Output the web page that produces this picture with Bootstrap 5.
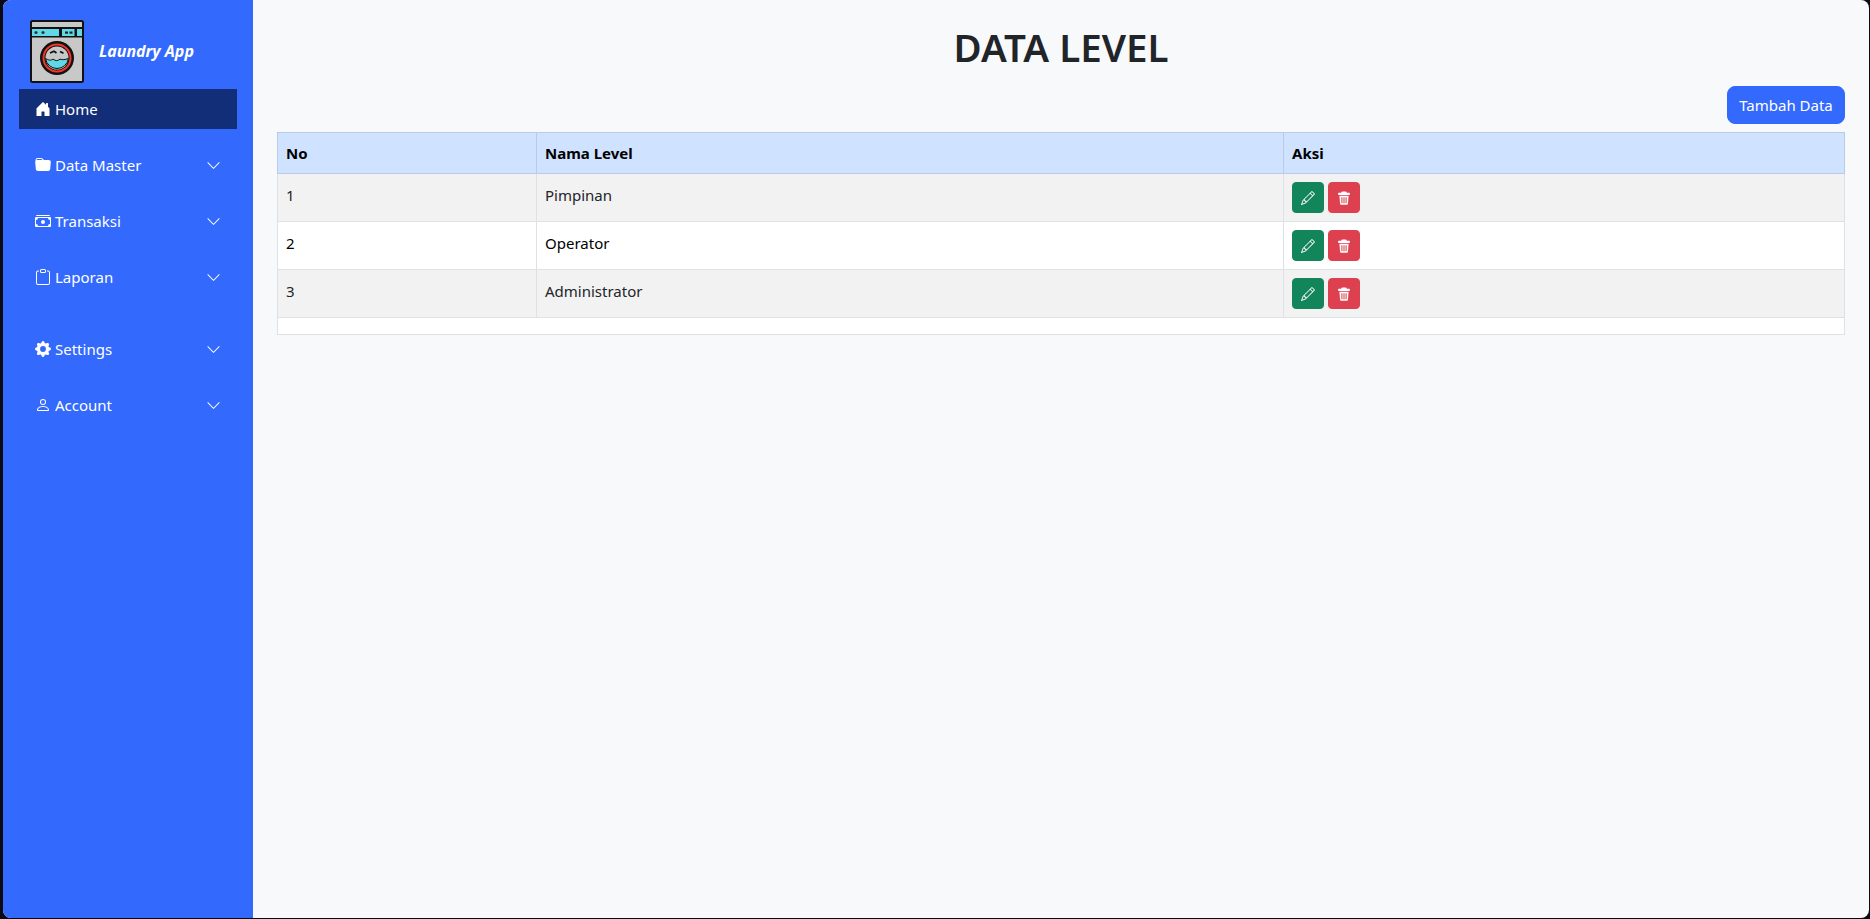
<!DOCTYPE html>
<html lang="en">
<head>
    <meta charset="UTF-8">
    <title>Data Level</title>
    <link href="https://cdn.jsdelivr.net/npm/bootstrap@5.3.0/dist/css/bootstrap.min.css" rel="stylesheet">
    <style>
        html, body { height: 100%; }
        body {
            background-color: #0a0a14;
            font-family: "Noto Sans", "Open Sans", sans-serif;
            font-size: 15px;
            overflow: hidden;
        }
        .app-frame {
            height: 918px;
            margin-left: 3px;
            margin-right: 1px;
            border-radius: 8px;
            overflow: hidden;
            background-color: #f8f9fa;
        }
        .side-bar {
            width: 250px;
            flex-shrink: 0;
            background-color: #3369fd;
            padding: 20px 16px 0;
        }
        .brand-logo { width: 54px; height: 63px; margin-left: 11px; }
        .brand-name { font-size: 16px; font-weight: 700; font-style: italic; margin-left: 15px; margin-top: -2px; }
        .side-menu { margin-top: 6px; gap: 16px; }
        .side-link {
            height: 40px;
            padding: 0 16px;
            color: #fff;
            font-size: 15px;
        }
        .side-link:hover, .side-link:focus { color: #fff; }
        .side-link.active { background-color: #122e78; }
        .side-icon { width: 16px; height: 16px; margin-right: 4px; fill: currentColor; }
        .side-chevron { width: 15px; height: 15px; margin-left: auto; fill: currentColor; }
        .page-main { padding: 0 24px; }
        .page-title { font-size: 38.5px; font-weight: 600; line-height: 52px; margin: 21px 0 13px; color: #212529; }
        .btn-add {
            background-color: #3369fd;
            border-color: #3369fd;
            font-size: 15px;
            height: 38px;
            width: 118px;
            padding: 0;
            border-radius: 8px;
        }
        .level-table { table-layout: fixed; margin: 8px 0 0; font-size: 15px; background-color: #fff; color: #000; }
        .level-table th { height: 41px; padding: 0 8px; vertical-align: middle; color: #000; }
        .level-table tbody td { padding: 10px 8px 6px; color: #000; }
        .level-table tbody td.act-cell { padding: 8px; }
        .level-table tfoot td { height: 17px; padding: 0; }
        .col-no { width: 259px; }
        .col-name { width: 747px; }
        .act-btn {
            width: 32px;
            height: 31px;
            padding: 0;
            display: inline-flex;
            align-items: center;
            justify-content: center;
            vertical-align: top;
            border-radius: 4px;
        }
        .act-btn svg { width: 14px; height: 14px; fill: currentColor; }
        .act-edit { background-color: #13855a; border-color: #13855a; }
        .act-del { background-color: #dd404e; border-color: #dd404e; }
    </style>
</head>
<body>
    <svg class="d-none">
        <symbol id="ic-chevron" viewBox="0 0 16 16"><path d="M1.646 4.646a.5.5 0 0 1 .708 0L8 10.293l5.646-5.647a.5.5 0 0 1 .708.708l-6 6a.5.5 0 0 1-.708 0l-6-6a.5.5 0 0 1 0-.708z"/></symbol>
        <symbol id="ic-pencil" viewBox="0 0 16 16"><path d="M12.146.146a.5.5 0 0 1 .708 0l3 3a.5.5 0 0 1 0 .708l-10 10a.5.5 0 0 1-.168.11l-5 2a.5.5 0 0 1-.65-.65l2-5a.5.5 0 0 1 .11-.168l10-10zM11.207 2.5 13.5 4.793 14.793 3.5 12.5 1.207 11.207 2.5zm1.586 3L10.5 3.207 4 9.707V10h.5a.5.5 0 0 1 .5.5v.5h.5a.5.5 0 0 1 .5.5v.5h.293l6.5-6.5zm-9.761 5.175-.106.106-1.528 3.821 3.821-1.528.106-.106A.5.5 0 0 1 5 12.5V12h-.5a.5.5 0 0 1-.5-.5V11h-.5a.5.5 0 0 1-.468-.325z"/></symbol>
        <symbol id="ic-trash" viewBox="0 0 16 16"><path fill-rule="evenodd" d="M6 .5h4a1 1 0 0 1 1 1V2h3a.75.75 0 0 1 .75.75v1a.75.75 0 0 1-.75.75H2a.75.75 0 0 1-.75-.75v-1A.75.75 0 0 1 2 2h3v-.5a1 1 0 0 1 1-1ZM2.800 5.500h10.400l-.7 9a1.300 1.300 0 0 1-1.300 1.200H4.800a1.300 1.300 0 0 1-1.300-1.200l-.7-9Zm2.200 1.500v7h1.200V7H5Zm2.400 0v7h1.200V7H7.400Zm2.400 0v7H11V7H9.800Z"/></symbol>
    </svg>
    <div class="app-frame d-flex">
        <aside class="side-bar d-flex flex-column">
            <div class="d-flex align-items-center text-white">
                <svg class="brand-logo" viewBox="0 0 54 63">
                    <rect x="1" y="1" width="52" height="61" rx="1.5" fill="#c8c8c8" stroke="#111" stroke-width="2"/>
                    <rect x="2" y="7" width="50" height="2" fill="#111"/>
                    <rect x="2" y="9" width="50" height="7" fill="#5fd9e8"/>
                    <rect x="2" y="16" width="50" height="1.5" fill="#111"/>
                    <rect x="29" y="9" width="3" height="7" fill="#111"/>
                    <rect x="44.5" y="9" width="2.5" height="7" fill="#111"/>
                    <circle cx="6" cy="12.5" r="1.6" fill="#333"/>
                    <circle cx="13" cy="12.5" r="1.6" fill="#333"/>
                    <rect x="35" y="11.5" width="3" height="2.2" fill="#222"/>
                    <rect x="39.5" y="11.5" width="3" height="2.2" fill="#222"/>
                    <circle cx="27" cy="38" r="17" fill="#111"/>
                    <circle cx="27" cy="38" r="14.5" fill="#f0382a"/>
                    <circle cx="27" cy="38" r="12.5" fill="#111"/>
                    <circle cx="27" cy="38" r="11.5" fill="#c8c8c8"/>
                    <path d="M15.600 38.500c3 1.600 5 2.400 7.400.6 2.600 2 4.800 2 7 0 2.400 1 5 .6 8.400-.6a11.500 11.500 0 0 1-22.800 0z" fill="#5fd9e8" stroke="#111" stroke-width="1"/>
                    <path d="M20 33l4-1.800 2.500 1.800m3.500-1.500 3.500 1.800" fill="none" stroke="#111" stroke-width="1.700"/>
                </svg>
                <span class="brand-name">Laundry App</span>
            </div>
            <nav class="nav flex-column side-menu">
                <a class="nav-link side-link active d-flex align-items-center" href="#">
                    <svg class="side-icon" viewBox="0 0 16 16"><path d="M6.500 14.500v-3.505c0-.245.250-.495.500-.495h2c.250 0 .500.250.500.500v3.500a.5.5 0 0 0 .5.5h4a.5.5 0 0 0 .5-.5v-7a.5.5 0 0 0-.146-.354L13 5.793V2.500a.5.5 0 0 0-.5-.5h-1a.5.5 0 0 0-.5.5v1.293L8.354 1.146a.5.5 0 0 0-.708 0l-6 6A.5.5 0 0 0 1.500 7.500v7a.5.5 0 0 0 .5.5h4a.5.5 0 0 0 .5-.5Z"/></svg>
                    Home
                </a>
                <a class="nav-link side-link d-flex align-items-center" href="#">
                    <svg class="side-icon" viewBox="0 0 16 16"><path d="M9.828 3h3.982a2 2 0 0 1 1.992 2.181l-.637 7A2 2 0 0 1 13.174 14H2.825a2 2 0 0 1-1.991-1.819l-.637-7a1.99 1.99 0 0 1 .342-1.31L.5 3a2 2 0 0 1 2-2h3.672a2 2 0 0 1 1.414.586l.828.828A2 2 0 0 0 9.828 3zm-8.322.12C1.72 3.042 1.95 3 2.19 3h5.396l-.707-.707A1 1 0 0 0 6.172 2H2.5a1 1 0 0 0-1 .981l.006.139z"/></svg>
                    Data Master
                    <svg class="side-chevron"><use href="#ic-chevron"/></svg>
                </a>
                <a class="nav-link side-link d-flex align-items-center" href="#">
                    <svg class="side-icon" viewBox="0 0 16 16"><path d="M1 3a1 1 0 0 1 1-1h12a1 1 0 0 1 1 1H1zm7 8a2 2 0 1 0 0-4 2 2 0 0 0 0 4z"/><path d="M0 5a1 1 0 0 1 1-1h14a1 1 0 0 1 1 1v8a1 1 0 0 1-1 1H1a1 1 0 0 1-1-1V5zm3 0a2 2 0 0 1-2 2v4a2 2 0 0 1 2 2h10a2 2 0 0 1 2-2V7a2 2 0 0 1-2-2H3z"/></svg>
                    Transaksi
                    <svg class="side-chevron"><use href="#ic-chevron"/></svg>
                </a>
                <a class="nav-link side-link d-flex align-items-center" href="#">
                    <svg class="side-icon" viewBox="0 0 16 16"><path d="M4 1.500H3a2 2 0 0 0-2 2V14a2 2 0 0 0 2 2h10a2 2 0 0 0 2-2V3.500a2 2 0 0 0-2-2h-1v1h1a1 1 0 0 1 1 1V14a1 1 0 0 1-1 1H3a1 1 0 0 1-1-1V3.500a1 1 0 0 1 1-1h1v-1z"/><path d="M9.500 1a.5.5 0 0 1 .5.5v1a.5.5 0 0 1-.5.5h-3a.5.5 0 0 1-.5-.5v-1a.5.5 0 0 1 .5-.5h3zm-3-1A1.500 1.500 0 0 0 5 1.500v1A1.500 1.500 0 0 0 6.500 4h3A1.500 1.500 0 0 0 11 2.500v-1A1.500 1.500 0 0 0 9.500 0h-3z"/></svg>
                    Laporan
                    <svg class="side-chevron"><use href="#ic-chevron"/></svg>
                </a>
                <a class="nav-link side-link d-flex align-items-center mt-3" href="#">
                    <svg class="side-icon" viewBox="0 0 16 16"><path d="M9.405 1.05c-.413-1.4-2.397-1.4-2.81 0l-.1.34a1.464 1.464 0 0 1-2.105.872l-.31-.17c-1.283-.698-2.686.705-1.987 1.987l.169.311c.446.82.023 1.841-.872 2.105l-.34.1c-1.4.413-1.4 2.397 0 2.81l.34.1a1.464 1.464 0 0 1 .872 2.105l-.17.31c-.698 1.283.705 2.686 1.987 1.987l.311-.169a1.464 1.464 0 0 1 2.105.872l.1.34c.413 1.4 2.397 1.4 2.81 0l.1-.34a1.464 1.464 0 0 1 2.105-.872l.31.17c1.283.698 2.686-.705 1.987-1.987l-.169-.311a1.464 1.464 0 0 1 .872-2.105l.34-.1c1.4-.413 1.4-2.397 0-2.81l-.34-.1a1.464 1.464 0 0 1-.872-2.105l.17-.31c.698-1.283-.705-2.686-1.987-1.987l-.311.169a1.464 1.464 0 0 1-2.105-.872l-.1-.34zM8 10.93a2.929 2.929 0 1 1 0-5.86 2.929 2.929 0 0 1 0 5.858z"/></svg>
                    Settings
                    <svg class="side-chevron"><use href="#ic-chevron"/></svg>
                </a>
                <a class="nav-link side-link d-flex align-items-center" href="#">
                    <svg class="side-icon" viewBox="0 0 16 16"><path d="M8 8a3 3 0 1 0 0-6 3 3 0 0 0 0 6Zm2-3a2 2 0 1 1-4 0 2 2 0 0 1 4 0Zm4 8c0 1-1 1-1 1H3s-1 0-1-1 1-4 6-4 6 3 6 4Zm-1-.004c-.001-.246-.154-.986-.832-1.664C11.516 10.68 10.289 10 8 10c-2.29 0-3.516.68-4.168 1.332-.678.678-.83 1.418-.832 1.664h10Z"/></svg>
                    Account
                    <svg class="side-chevron"><use href="#ic-chevron"/></svg>
                </a>
            </nav>
        </aside>

        <main class="page-main flex-grow-1">
            <h1 class="page-title text-center">DATA LEVEL</h1>
            <div class="d-flex justify-content-end">
                <button type="button" class="btn btn-primary btn-add">Tambah Data</button>
            </div>
            <table class="table table-bordered table-striped level-table">
                <colgroup><col class="col-no"><col class="col-name"><col></colgroup>
                <thead class="table-primary">
                    <tr><th>No</th><th>Nama Level</th><th>Aksi</th></tr>
                </thead>
                <tbody>
                    <tr>
                        <td>1</td>
                        <td>Pimpinan</td>
                        <td class="act-cell">
                            <button type="button" class="btn btn-success act-btn act-edit"><svg><use href="#ic-pencil"/></svg></button>
                            <button type="button" class="btn btn-danger act-btn act-del"><svg><use href="#ic-trash"/></svg></button>
                        </td>
                    </tr>
                    <tr>
                        <td>2</td>
                        <td>Operator</td>
                        <td class="act-cell">
                            <button type="button" class="btn btn-success act-btn act-edit"><svg><use href="#ic-pencil"/></svg></button>
                            <button type="button" class="btn btn-danger act-btn act-del"><svg><use href="#ic-trash"/></svg></button>
                        </td>
                    </tr>
                    <tr>
                        <td>3</td>
                        <td>Administrator</td>
                        <td class="act-cell">
                            <button type="button" class="btn btn-success act-btn act-edit"><svg><use href="#ic-pencil"/></svg></button>
                            <button type="button" class="btn btn-danger act-btn act-del"><svg><use href="#ic-trash"/></svg></button>
                        </td>
                    </tr>
                </tbody>
                <tfoot>
                    <tr><td colspan="3"></td></tr>
                </tfoot>
            </table>
        </main>
    </div>
    <script src="https://cdn.jsdelivr.net/npm/bootstrap@5.3.0/dist/js/bootstrap.bundle.min.js"></script>
</body>
</html>
